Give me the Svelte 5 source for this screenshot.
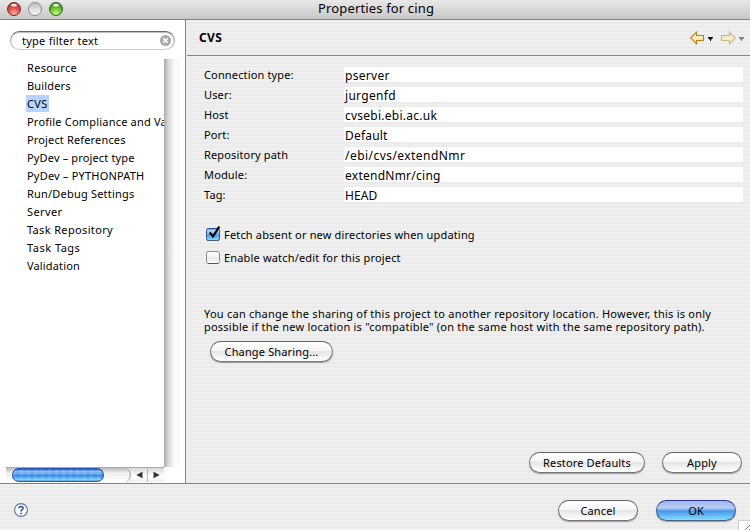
<script>
  const categories = [
    ['Resource', .3], ['Builders', .15], ['CVS', .3], ['Profile Compliance and Validation', .2],
    ['Project References', .15], ['PyDev – project type', .15], ['PyDev – PYTHONPATH', .2],
    ['Run/Debug Settings', .2], ['Server', .4], ['Task Repository', .35], ['Task Tags', .5], ['Validation', .15]
  ];
  const fields = [
    ['Connection type:', 'pserver', .3], ['User:', 'jurgenfd', .3], ['Host', 'cvsebi.ebi.ac.uk', .25],
    ['Port:', 'Default', .2], ['Repository path', '/ebi/cvs/extendNmr', .45],
    ['Module:', 'extendNmr/cing', .25], ['Tag:', 'HEAD', .1]
  ];
</script>

<div class="window">
  <header class="titlebar">
    <i class="light red"></i><i class="light gray"></i><i class="light green"></i>
    <span class="title">Properties for cing</span>
  </header>
  <div class="main">
    <aside>
      <div class="search">
        <span>type filter text</span>
        <svg width="11" height="11" viewBox="0 0 11 11"><circle cx="5.5" cy="5.5" r="5.5" fill="#aaa"/><path d="M3.4 3.4l4.2 4.2M7.6 3.4L3.4 7.6" stroke="#fff" stroke-width="1.6"/></svg>
      </div>
      <div class="treearea">
        <ul>
          {#each categories as [name, spacing]}
            <li><span class:selected={name === 'CVS'} style:letter-spacing="{spacing}px">{name}</span></li>
          {/each}
        </ul>
        <div class="vtrack"></div>
      </div>
      <div class="hscroll">
        <div class="htrack"><div class="thumb"></div></div>
        <div class="arrow"><svg width="7" height="8" viewBox="0 0 7 8"><path d="M6.5 .8v6.4L.3 4z" fill="#333"/></svg></div>
        <div class="arrow second"><svg width="7" height="8" viewBox="0 0 7 8"><path d="M.5 .8v6.4L6.7 4z" fill="#333"/></svg></div>
      </div>
    </aside>
    <section>
      <div class="head">
        <h1>CVS</h1>
        <div class="nav">
          <svg width="55" height="14" viewBox="0 0 55 14">
            <defs><linearGradient id="gold" x2="0" y2="1"><stop offset="0" stop-color="#fffbe0"/><stop offset="1" stop-color="#fbdc80"/></linearGradient></defs>
            <path d="M.7 7L6.5 1.2V4.5H13.5V9.5H6.5V12.8z" fill="url(#gold)" stroke="#b9801c" stroke-width="1.1"/>
            <path d="M18 6h5v1.5h-1v1h-1v1.5h-1V8.500h-1v-1h-1z" fill="#111"/>
            <path d="M45.3 7L39.5 1.2V4.5H31.5V9.5H39.5V12.8z" fill="#f5edcf" stroke="#d2b481" stroke-width="1.1"/>
            <path d="M49 6h5v1.5h-1v1h-1v1.5h-1V8.500h-1v-1h-1z" fill="#808080"/>
          </svg>
        </div>
      </div>
      <div class="form">
        {#each fields as [label, value, spacing]}
          <div class="row"><span class="label">{label}</span><span class="value" style:letter-spacing="{spacing}px">{value}</span></div>
        {/each}
      </div>
      <div class="checks">
        <div class="check"><svg width="17" height="18" viewBox="0 0 17 18">
          <defs><linearGradient id="aqua" x2="0" y2="1"><stop offset="0" stop-color="#3974cb"/><stop offset=".15" stop-color="#b9d4f6"/><stop offset=".48" stop-color="#77aeee"/><stop offset=".52" stop-color="#4a97eb"/><stop offset="1" stop-color="#8de2ff"/></linearGradient></defs>
          <rect x="1.5" y="4.5" width="13" height="12" rx="2" fill="url(#aqua)" stroke="#29529b"/><path d="M2 16.5h12" stroke="#4a5d70"/><path d="M4.700 8.500L8 12.500 14.300 2.700" fill="none" stroke="#000" stroke-width="2.2"/></svg><span>Fetch absent or new directories when updating</span></div>
        <div class="check"><svg width="17" height="18" viewBox="0 0 17 18">
          <defs><linearGradient id="plain" x2="0" y2="1"><stop offset="0" stop-color="#fff"/><stop offset=".48" stop-color="#f3f3f3"/><stop offset=".52" stop-color="#e5e5e5"/><stop offset="1" stop-color="#fff"/></linearGradient></defs>
          <rect x="1.5" y="4.5" width="13" height="12" rx="2" fill="url(#plain)" stroke="#8a8a8a"/><path d="M3 16.5h10" stroke="#555"/></svg><span>Enable watch/edit for this project</span></div>
      </div>
      <p><span class="line">You can change the sharing of this project to another repository location. However, this is only</span><span class="line second-line">possible if the new location is "compatible" (on the same host with the same repository path).</span></p>
      <button class="change">Change Sharing...</button>
      <div class="actions"><button class="restore">Restore Defaults</button><button class="apply">Apply</button></div>
    </section>
  </div>
  <footer>
    <svg class="help" width="14" height="14" viewBox="0 0 14 14"><circle cx="7" cy="7" r="6.4" fill="#f8faff" stroke="#5d7595" stroke-width="1.1"/><path d="M4.9 5.3C5 2.7 9.2 2.8 9.1 5.2 9 6.7 7 6.700 7 8.600" fill="none" stroke="#344f82" stroke-width="1.5"/><path d="M6.2 9.8h1.6v1.5H6.2z" fill="#344f82"/></svg>
    <button class="cancel">Cancel</button><button class="ok">OK</button>
    <svg class="grip" width="12" height="10" viewBox="0 0 12 10"><path d="M0 0h12v10H0z" fill="#fff"/><path d="M.5 10V.5H12" fill="none" stroke="#d0d0d0"/><path d="M7 10l5-5M11 10l1-1" stroke="#777"/></svg>
  </footer>
</div>

<style>
  :global(body) { margin: 0; }
  .window { width: 750px; height: 530px; overflow: hidden; display: flex; flex-direction: column; box-sizing: border-box; font: 11px/18px "Noto Sans", "Open Sans", sans-serif; letter-spacing: .15px; color: #000; background: repeating-linear-gradient(#efefef 0 2px, #ebebeb 2px 4px); white-space: nowrap; }
  .titlebar { position: relative; height: 19px; flex: none; border-bottom: 1px solid #858585; background: linear-gradient(#e8e8e8, #c8c8c8); display: flex; padding-left: 7px; gap: 7px; box-sizing: content-box; }
  .light { width: 14px; height: 14px; margin-top: 2px; border-radius: 50%; box-sizing: border-box; }
  .red { border: 1px solid #722; background: radial-gradient(ellipse 4px 2px at 50% 18%, #fff 30%, transparent), radial-gradient(circle at 50% 90%, #ffada0, #dc4c48 50%, #94302f); }
  .gray { border: 1px solid #8b8b8b; background: linear-gradient(#bbb, #ddd 50%, #f5f5f5); }
  .green { border: 1px solid #345c1e; background: radial-gradient(ellipse 4px 2px at 50% 18%, #fff 30%, transparent), radial-gradient(circle at 50% 90%, #c8ff86, #66bd2f 50%, #34751b); }
  .title { position: absolute; left: 318px; top: -1px; font-size: 13px; letter-spacing: .15px; }
  .main { display: flex; height: 463px; flex: none; }
  aside { width: 185px; flex: none; border-right: 1px solid #858585; background: #fff; display: flex; flex-direction: column; }
  .search { box-sizing: border-box; width: 165px; height: 19px; margin: 11px 0 9px 10px; border: 1px solid #aaa; border-top: 1px solid #666; border-bottom-color: #ccc; border-radius: 10px; box-shadow: inset 0 1px 1px #bbb; display: flex; align-items: center; justify-content: space-between; padding: 0 3px 0 11px; letter-spacing: .25px; }
  .treearea { display: flex; height: 408px; }
  ul { list-style: none; margin: 0; padding: 0 0 0 26px; width: 138px; overflow: hidden; }
  li { height: 18px; line-height: 18px; }
  li span { display: inline-block; padding: 0 1px; height: 17px; }
  li .selected { background: #b5d5ff; }
  .vtrack { width: 15px; background: linear-gradient(90deg, #a9a9a9, #dadada 30%, #f5f5f5 65%, #fff 80%, #f4f4f4); }
  .hscroll { margin-left: 6px; width: 158px; height: 15px; display: flex; background: linear-gradient(#d8d8d8, #fff 60%, #eee); border-top: 1px solid #aaa; box-sizing: border-box; }
  .htrack { width: 126px; padding-left: 6px; box-sizing: border-box; border-radius: 0 8px 8px 0; border-right: 1px solid #999; background: linear-gradient(#bbb, #eee 35%, #fff); }
  .thumb { height: 14px; width: 92px; border-radius: 8px; box-sizing: border-box; border: 1px solid #2254b4; border-bottom-color: #48617d; background: repeating-linear-gradient(90deg, #ffffff18 0 3px, transparent 3px 7px), linear-gradient(#1548bd, #8dbaf3 18%, #5ba0ed 45%, #2d81e4 52%, #82d1ff 90%, #468fca); }
  .arrow { width: 16px; display: flex; align-items: center; justify-content: center; }
  .arrow.second { border-left: 1px solid #bbb; }
  section { width: 564px; display: flex; flex-direction: column; }
  .head { height: 35px; margin-left: 1px; border-bottom: 1px solid #858585; display: flex; align-items: center; justify-content: space-between; }
  h1 { margin: 0 0 0 12px; font-size: 12px; letter-spacing: .4px; }
  .nav { margin-right: 5px; height: 14px; display: flex; }
  .form { padding: 11px 7px 0 18px; display: flex; flex-direction: column; gap: 5px; }
  .row { display: flex; height: 15px; line-height: 17px; }
  .label { width: 140px; line-height: 15px; }
  .value { flex: 1; background: #fff; padding-left: 1px; font-size: 12px; }
  .checks { padding: 22px 0 0 19px; display: flex; flex-direction: column; gap: 5px; }
  .check { display: flex; height: 18px; line-height: 21px; gap: 2px; letter-spacing: .17px; }
  p { margin: 42px 0 0 18px; letter-spacing: .24px; }
  .line { display: block; height: 13px; line-height: 13px; }
  .second-line { letter-spacing: .22px; }
  button { height: 21px; padding: 0; border: 1px solid #777; border-top-color: #666; border-radius: 11px; font: inherit; line-height: 18px; letter-spacing: .15px; color: #000; background: linear-gradient(#fff, #f5f5f5 45%, #e5e5e5 50%, #fff); box-shadow: 0 1px 1px #999; }
  .change { width: 123px; margin: 8px 0 0 24px; letter-spacing: .15px; }
  .actions { margin-top: auto; padding: 0 8px 10px 0; display: flex; justify-content: flex-end; gap: 17px; }
  .restore { width: 116px; }
  .apply { width: 80px; }
  footer { position: relative; height: 46px; border-top: 1px solid #858585; display: flex; align-items: flex-start; }
  .help { margin: 19px 0 0 14px; }
  .cancel { width: 80px; margin: 16px 0 0 530px; }
  .ok { width: 80px; margin: 16px 0 0 18px; border-color: #29339b #365ba5 #43627c; background: linear-gradient(#a4b8ed, #b5cdf2 35%, #7eafea 47%, #4694e8 52%, #84ddff); }
  .grip { position: absolute; right: 0; bottom: 0; }
</style>
